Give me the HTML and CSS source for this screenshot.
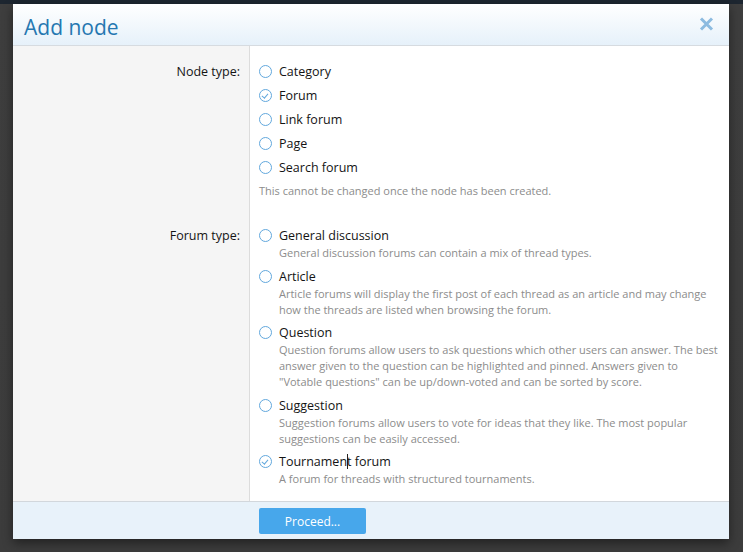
FILE: index.html
```html
<!DOCTYPE html>
<html lang="en">
<head>
<meta charset="utf-8">
<title>Add node</title>
<link rel="stylesheet" href="styles.css">
</head>
<body>
<div class="overlay">
  <div class="dialog">
    <div class="dialog-header">
      <h1 class="dialog-title">Add node</h1>
      <span class="dialog-close" aria-label="Close">
        <svg width="15" height="14" viewBox="0 0 15 14"><path d="M2 1.5 L13 12.5 M13 1.5 L2 12.5" stroke="#8cbbe0" stroke-width="3" fill="none"/></svg>
      </span>
    </div>
    <div class="dialog-body">
      <div class="form-row first">
        <div class="row-label">Node type:</div>
        <div class="row-input">
          <ul class="choices">
            <li class="choice"><span class="radio"></span><span class="choice-text">Category</span></li>
            <li class="choice"><span class="radio checked"></span><span class="choice-text">Forum</span></li>
            <li class="choice"><span class="radio"></span><span class="choice-text">Link forum</span></li>
            <li class="choice"><span class="radio"></span><span class="choice-text">Page</span></li>
            <li class="choice"><span class="radio"></span><span class="choice-text">Search forum</span></li>
          </ul>
          <div class="explain">This cannot be changed once the node has been created.</div>
        </div>
      </div>
      <div class="form-row second">
        <div class="row-label">Forum type:</div>
        <div class="row-input">
          <ul class="choices choices-described">
            <li class="choice"><span class="radio"></span><div class="choice-body"><div class="choice-text">General discussion</div><div class="hint">General discussion forums can contain a mix of thread types.</div></div></li>
            <li class="choice"><span class="radio"></span><div class="choice-body"><div class="choice-text">Article</div><div class="hint">Article forums will display the first post of each thread as an article and may change how the threads are listed when browsing the forum.</div></div></li>
            <li class="choice"><span class="radio"></span><div class="choice-body"><div class="choice-text">Question</div><div class="hint">Question forums allow users to ask questions which other users can answer. The best answer given to the question can be highlighted and pinned. Answers given to "Votable questions" can be up/down-voted and can be sorted by score.</div></div></li>
            <li class="choice"><span class="radio"></span><div class="choice-body"><div class="choice-text">Suggestion</div><div class="hint">Suggestion forums allow users to vote for ideas that they like. The most popular suggestions can be easily accessed.</div></div></li>
            <li class="choice"><span class="radio checked"></span><div class="choice-body"><div class="choice-text">Tournamen<span class="caret"></span>t forum</div><div class="hint">A forum for threads with structured tournaments.</div></div></li>
          </ul>
        </div>
      </div>
    </div>
    <div class="dialog-footer">
      <div class="footer-spacer"></div>
      <div class="footer-actions"><button class="button-primary">Proceed...</button></div>
    </div>
  </div>
</div>
</body>
</html>
```
FILE: styles.css
```css
html, body {
  margin: 0;
  padding: 0;
}
body {
  width: 743px;
  height: 552px;
  overflow: hidden;
  background: linear-gradient(to bottom, #1d2630 0, #1d2630 4px, #3e3e3e 4px, #3c3c3c 100%);
  font-family: "Open Sans", "Noto Sans", sans-serif;
  color: #141414;
}
.overlay {
  padding: 4px 0 0 13px;
}
.dialog {
  width: 716px;
  height: 535px;
  background: #fff;
  display: flex;
  flex-direction: column;
  box-shadow: 0 4px 10px rgba(0,0,0,0.45);
}
.dialog-header {
  height: 42px;
  box-sizing: border-box;
  border-bottom: 1px solid #d6dbe0;
  background: linear-gradient(to bottom, #ffffff 0%, #e6f1fa 100%);
  display: flex;
  align-items: center;
  justify-content: space-between;
  padding: 0 15px 0 11px;
}
.dialog-title {
  margin: 0;
  font-size: 21px;
  font-weight: 400;
  color: #2577b1;
  line-height: 1;
  padding-top: 5px;
}
.dialog-close {
  display: flex;
  width: 15px;
  height: 14px;
  margin-bottom: 1px;
}
.dialog-body {
  flex: 1;
  display: flex;
  flex-direction: column;
  background: linear-gradient(to right, #f5f5f5 0, #f5f5f5 236px, #dcdcdc 236px, #dcdcdc 237px, #ffffff 237px);
  padding: 16px 0 0 0;
}
.form-row {
  display: grid;
  grid-template-columns: 236px 1fr;
}
.form-row.second {
  margin-top: 27px;
}
.row-label {
  text-align: right;
  padding-right: 9px;
  font-size: 12.5px;
  line-height: 20px;
}
.row-input {
  padding-left: 10px;
  padding-right: 10px;
}
.choices {
  list-style: none;
  margin: 0;
  padding: 0;
  display: flex;
  flex-direction: column;
  gap: 4px;
}
.choices-described {
  gap: 5.5px;
}
.choice {
  display: flex;
  gap: 7px;
  align-items: flex-start;
}
.radio {
  flex: none;
  width: 13px;
  height: 13px;
  box-sizing: border-box;
  margin-top: 3px;
  border: 1.5px solid #62a8dd;
  border-radius: 50%;
  position: relative;
}
.radio.checked::after {
  content: "";
  position: absolute;
  left: 3px;
  top: 1.6px;
  width: 2.5px;
  height: 5px;
  border: solid #62a8dd;
  border-width: 0 1.5px 1.5px 0;
  transform: rotate(40deg);
}
.choice-text {
  font-size: 12.5px;
  line-height: 20px;
}
.choice-body {
  flex: 1;
}
.hint, .explain {
  font-size: 11px;
  line-height: 16px;
  color: #8c8c8c;
}
.hint {
  margin-top: -1px;
}
.explain {
  margin-top: 5px;
}
.caret {
  display: inline-block;
  width: 1px;
  height: 15px;
  background: #222;
  vertical-align: -3px;
  margin-right: -1px;
}
.dialog-footer {
  height: 38px;
  box-sizing: border-box;
  border-top: 1px solid #d2d7dc;
  background: #e8f2fa;
  display: grid;
  grid-template-columns: 246px 1fr;
  align-items: center;
}
.button-primary {
  width: 107px;
  height: 26px;
  border: none;
  border-radius: 2px;
  background: #47a7eb;
  color: #fff;
  font-family: "Open Sans", "Noto Sans", sans-serif;
  font-size: 12px;
  padding: 0;
  margin-top: 1px;
}
```
